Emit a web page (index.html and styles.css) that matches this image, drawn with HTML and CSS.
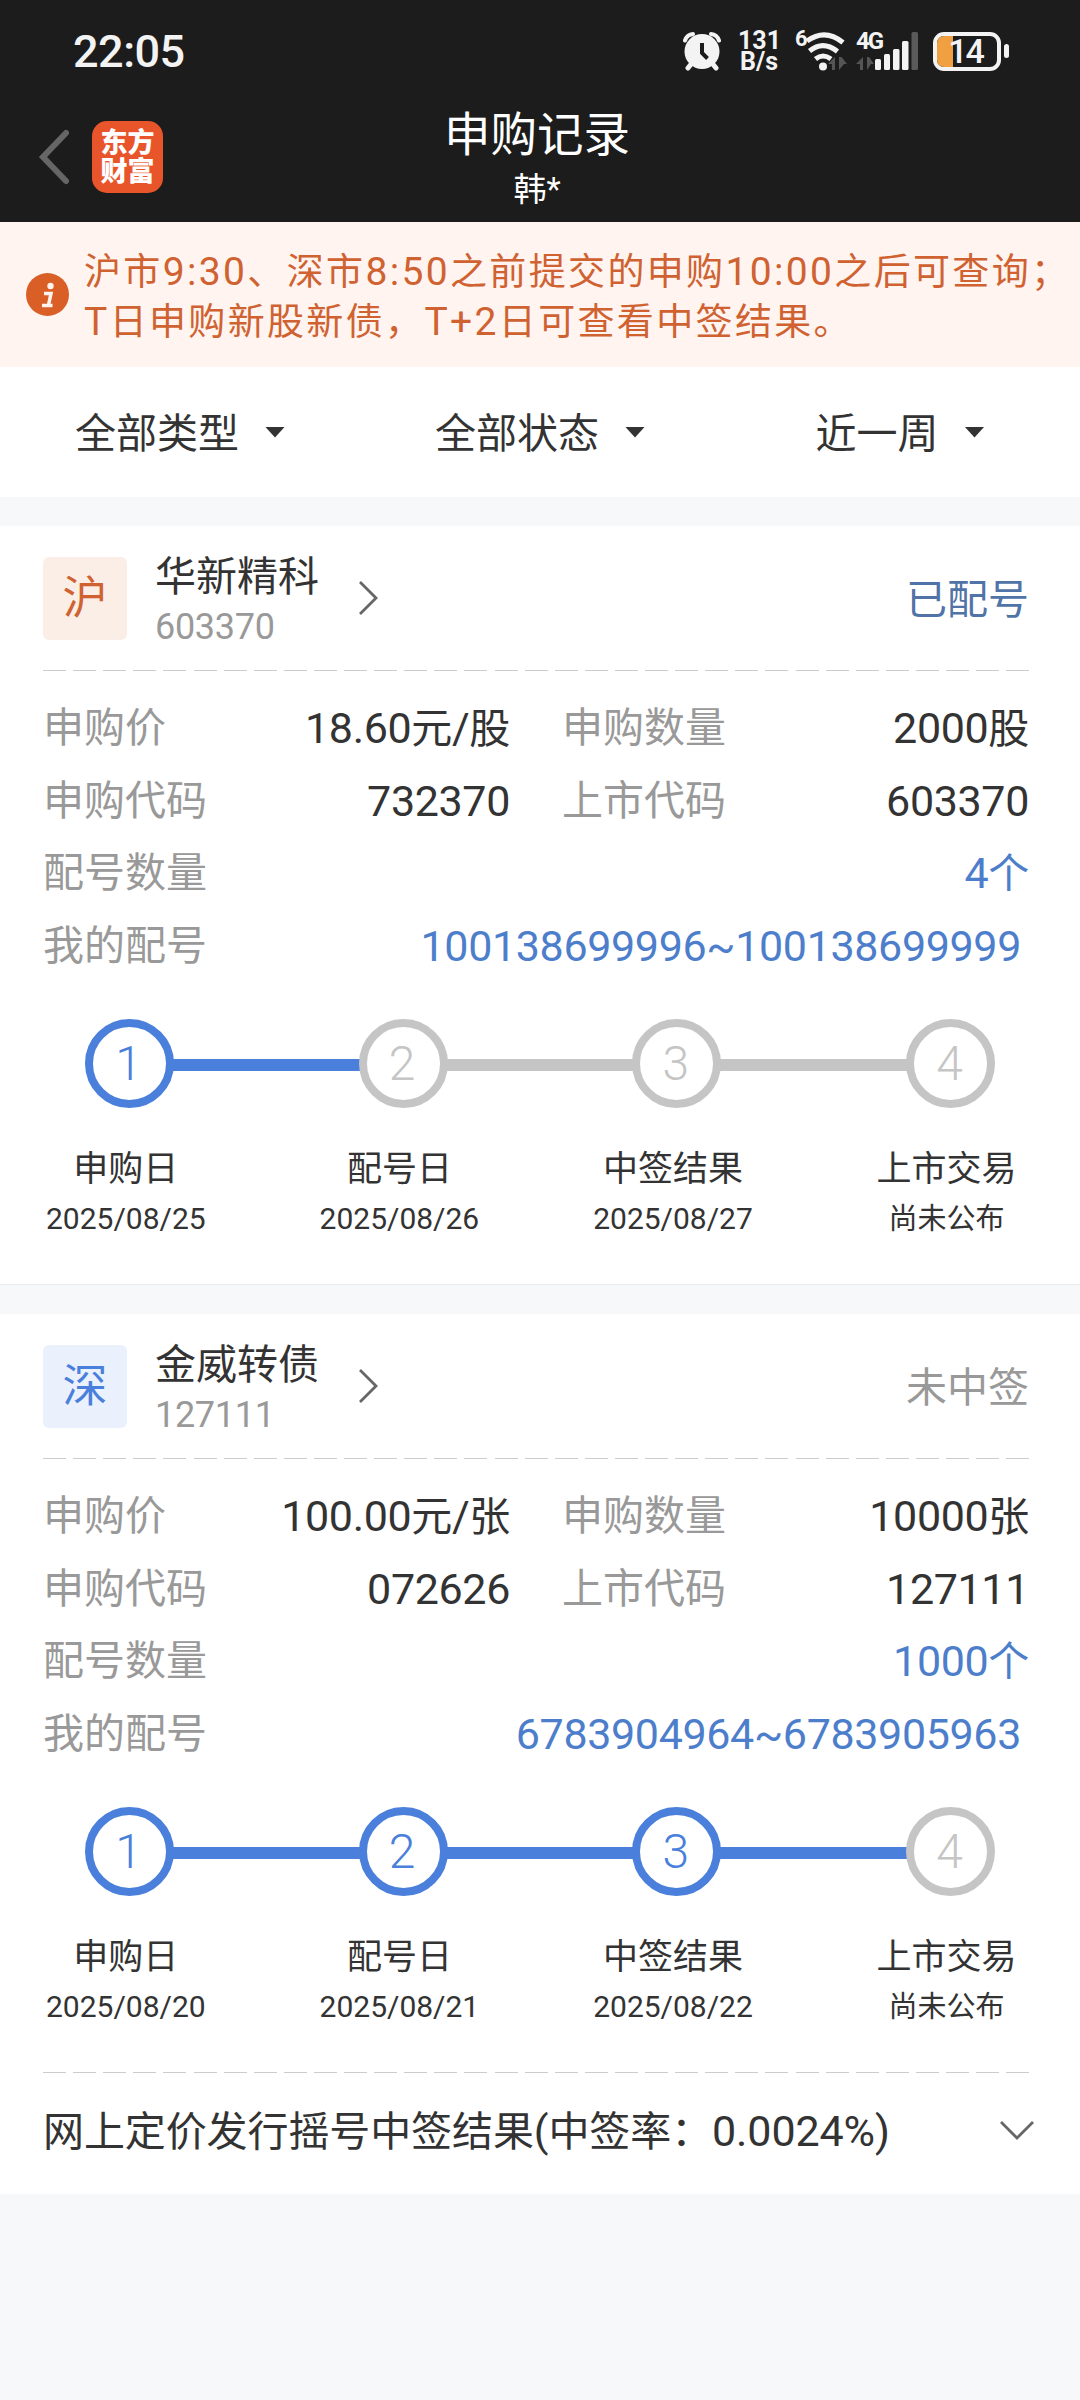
FILE: index.html
```html
<!DOCTYPE html>
<html lang="zh-CN">
<head>
    <meta charset="UTF-8">
    <meta name="viewport" content="width=device-width, initial-scale=1.0">
    <title>申购记录</title>
    <link rel="stylesheet" href="styles.css">
</head>
<body>
    <header class="header">
        <div class="status-bar">
            <span class="time">22:05</span>
            <div class="status-icons">
                <svg class="icon-alarm" width="38" height="40" viewBox="0 0 38 40">
                    <g fill="none" stroke="#f3f3f3" stroke-linecap="round">
                        <path d="M2 9.5Q4 3.500 10 3M36 9.500Q34 3.500 28 3" stroke-width="4"/>
                        <path d="M9 32l-4 5M29 32l4 5" stroke-width="5"/>
                    </g>
                    <circle cx="19" cy="20.500" r="17.500" fill="#f3f3f3"/>
                    <path d="M19 12v10l5.500 5.500" fill="none" stroke="#1c1c1c" stroke-width="4"/>
                </svg>
                <div class="speed">131<br>B/s</div>
                <div class="wifi">
                    <span class="wifi-gen">6</span>
                    <svg width="42" height="40" viewBox="0 0 42 40">
                        <g fill="none" stroke="#f3f3f3" stroke-width="5">
                            <path d="M2 10Q20 -3 38 11.500"/>
                            <path d="M4.500 20Q18 9 32.500 20.500"/>
                            <path d="M10.500 28Q18 22 26 28"/>
                        </g>
                        <circle cx="18" cy="35.500" r="4" fill="#f3f3f3"/>
                        <path d="M23 33l7-7v13h-3v-6zM34 39V26h2.500l5.500 7h-3z" fill="#555"/>
                    </svg>
                </div>
                <div class="signal">
                    <span class="signal-type">4G</span>
                    <svg width="64" height="40" viewBox="0 0 64 40">
                        <path d="M1 33l7-7v13h-3v-6zM12 39V26h2l5 7h-3z" fill="#555"/>
                        <g fill="#f3f3f3">
                            <rect x="20" y="28" width="6" height="11" rx="1.500"/>
                            <rect x="29" y="23" width="6" height="16" rx="1.500"/>
                            <rect x="38" y="18" width="6.500" height="21" rx="1.500"/>
                            <rect x="47" y="10" width="6.500" height="29" rx="1.500"/>
                        </g>
                        <rect x="56.500" y="1" width="6.500" height="38" rx="1.500" fill="#5a5a5a"/>
                    </svg>
                </div>
                <div class="battery">
                    <div class="battery-body"><div class="battery-level"></div><span>14</span></div>
                    <div class="battery-cap"></div>
                </div>
            </div>
        </div>
        <div class="nav">
            <div class="nav-left">
                <svg width="32" height="56" viewBox="0 0 32 56">
                    <path d="M28 4L5 28l23 24" fill="none" stroke="#666" stroke-width="6" stroke-linecap="round"/>
                </svg>
                <div class="logo"><span>东方</span><span>财富</span></div>
            </div>
            <div class="nav-title">
                <h1>申购记录</h1>
                <p>韩*</p>
            </div>
        </div>
    </header>

    <div class="notice">
        <svg width="43" height="43" viewBox="0 0 43 43">
            <circle cx="21.500" cy="21.500" r="21.500" fill="#d95f27"/>
            <circle cx="24.500" cy="13" r="3.200" fill="#fff4f0"/>
            <path d="M18 20.500h7l-2.500 11.500M16 32.500h10.500" fill="none" stroke="#fff4f0" stroke-width="3.500"/>
        </svg>
        <p>沪市<b>9:30</b>、深市<b>8:50</b>之前提交的申购<b>10:00</b>之后可查询；<br><b>T</b>日申购新股新债，<b>T+2</b>日可查看中签结果。</p>
    </div>

    <div class="filters">
        <div class="filter"><span>全部类型</span><i class="arrow"></i></div>
        <div class="filter"><span>全部状态</span><i class="arrow"></i></div>
        <div class="filter"><span>近一周</span><i class="arrow"></i></div>
    </div>

    <!-- 华新精科 -->
    <section class="card">
        <div class="card-head">
            <div class="market sh">沪</div>
            <div class="stock">
                <h2>华新精科</h2>
                <p>603370</p>
            </div>
            <svg class="chevron" width="22" height="36" viewBox="0 0 22 36">
                <path d="M2 2l16 16L2 34" fill="none" stroke="#666" stroke-width="2.800"/>
            </svg>
            <span class="state done">已配号</span>
        </div>
        <div class="dash"></div>
        <div class="info">
            <div class="cell"><span class="label">申购价</span><span class="value">18.60<em>元</em>/<em>股</em></span></div>
            <div class="cell"><span class="label">申购数量</span><span class="value">2000<em>股</em></span></div>
            <div class="cell"><span class="label">申购代码</span><span class="value">732370</span></div>
            <div class="cell"><span class="label">上市代码</span><span class="value">603370</span></div>
            <div class="cell wide"><span class="label">配号数量</span><span class="value link">4<em>个</em></span></div>
            <div class="cell wide"><span class="label">我的配号</span><span class="value link numbers">100138699996~100138699999</span></div>
        </div>
        <div class="track">
            <div class="dot on">1</div>
            <div class="line on"></div>
            <div class="dot">2</div>
            <div class="line"></div>
            <div class="dot">3</div>
            <div class="line"></div>
            <div class="dot">4</div>
        </div>
        <div class="steps">
            <div class="step"><h3>申购日</h3><p>2025/08/25</p></div>
            <div class="step"><h3>配号日</h3><p>2025/08/26</p></div>
            <div class="step"><h3>中签结果</h3><p>2025/08/27</p></div>
            <div class="step"><h3>上市交易</h3><p class="none">尚未公布</p></div>
        </div>
    </section>

    <!-- 金威转债 -->
    <section class="card">
        <div class="card-head">
            <div class="market sz">深</div>
            <div class="stock">
                <h2>金威转债</h2>
                <p>127111</p>
            </div>
            <svg class="chevron" width="22" height="36" viewBox="0 0 22 36">
                <path d="M2 2l16 16L2 34" fill="none" stroke="#666" stroke-width="2.800"/>
            </svg>
            <span class="state">未中签</span>
        </div>
        <div class="dash"></div>
        <div class="info">
            <div class="cell"><span class="label">申购价</span><span class="value">100.00<em>元</em>/<em>张</em></span></div>
            <div class="cell"><span class="label">申购数量</span><span class="value">10000<em>张</em></span></div>
            <div class="cell"><span class="label">申购代码</span><span class="value">072626</span></div>
            <div class="cell"><span class="label">上市代码</span><span class="value">127111</span></div>
            <div class="cell wide"><span class="label">配号数量</span><span class="value link">1000<em>个</em></span></div>
            <div class="cell wide"><span class="label">我的配号</span><span class="value link numbers">6783904964~6783905963</span></div>
        </div>
        <div class="track">
            <div class="dot on">1</div>
            <div class="line on"></div>
            <div class="dot on">2</div>
            <div class="line on"></div>
            <div class="dot on">3</div>
            <div class="line on"></div>
            <div class="dot">4</div>
        </div>
        <div class="steps">
            <div class="step"><h3>申购日</h3><p>2025/08/20</p></div>
            <div class="step"><h3>配号日</h3><p>2025/08/21</p></div>
            <div class="step"><h3>中签结果</h3><p>2025/08/22</p></div>
            <div class="step"><h3>上市交易</h3><p class="none">尚未公布</p></div>
        </div>
        <div class="dash"></div>
        <div class="result">
            <span>网上定价发行摇号中签结果<b>(</b>中签率：<b>0.0024%)</b></span>
            <svg width="36" height="22" viewBox="0 0 36 22">
                <path d="M2 2l16 16L34 2" fill="none" stroke="#666" stroke-width="2.800"/>
            </svg>
        </div>
    </section>
</body>
</html>
```

FILE: styles.css
```css
* {
    box-sizing: border-box;
    margin: 0;
    padding: 0;
}

body {
    width: 1080px;
    min-height: 2400px;
    background-color: #f7f8fa;
    color: #333;
    font-family: Roboto, "Noto Sans CJK SC", sans-serif;
    font-size: 41px;
}

h1, h2, h3, b {
    font-weight: normal;
}

em, i {
    font-style: normal;
}

svg {
    display: block;
    flex: none;
}

/* header */
.header {
    height: 222px;
    background-color: #1c1c1c;
    color: #fff;
}

.status-bar {
    display: flex;
    justify-content: space-between;
    height: 102px;
    padding: 31px 71px 0 73px;
    color: #f3f3f3;
    font-weight: 500;
}

.time {
    font-size: 45px;
    line-height: 41px;
    letter-spacing: -0.5px;
}

.status-icons {
    display: flex;
    height: 40px;
}

.speed {
    width: 42px;
    margin-top: -1px;
    margin-left: 17px;
    font-size: 25px;
    line-height: 21px;
    font-weight: 700;
    text-align: center;
}

.wifi {
    display: flex;
    margin-left: 15px;
}

.wifi-gen {
    width: 10px;
    font-size: 22px;
    line-height: 16px;
    font-weight: 700;
    letter-spacing: -1px;
}

.signal {
    position: relative;
    margin-left: 8px;
}

.signal-type {
    position: absolute;
    top: 0;
    left: 1px;
    font-size: 24px;
    line-height: 21px;
    font-weight: 700;
    letter-spacing: -2px;
}

.battery {
    display: flex;
    align-items: center;
    margin-left: 14px;
}

.battery-body {
    position: relative;
    display: flex;
    align-items: center;
    justify-content: center;
    width: 68px;
    height: 39px;
    border: 4px solid #f3f3f3;
    border-radius: 11px;
    overflow: hidden;
    font-size: 34px;
    line-height: 31px;
}

.battery-level {
    position: absolute;
    left: 0;
    top: 0;
    width: 16px;
    height: 31px;
    background-color: #f0a040;
}

.battery-body span {
    position: relative;
    margin-right: 3px;
    letter-spacing: -2px;
}

.battery-cap {
    width: 5px;
    height: 14px;
    margin-left: 3px;
    border-radius: 3px;
    background-color: #f3f3f3;
}

.nav {
    display: grid;
    grid-template-columns: 300px 1fr 306px;
    height: 120px;
}

.nav-left {
    display: flex;
    align-items: center;
    height: 109px;
    padding-left: 38px;
}

.logo {
    display: flex;
    flex-direction: column;
    justify-content: center;
    width: 71px;
    height: 72px;
    margin-left: 22px;
    padding-top: 2px;
    border-radius: 15px;
    background-color: #e9552b;
    font-size: 27px;
    line-height: 29px;
    font-weight: 900;
    text-align: center;
}

.nav-title {
    padding-top: 1px;
    text-align: center;
}

.nav-title h1 {
    font-size: 46.5px;
    line-height: 64px;
}

.nav-title p {
    font-size: 33px;
    line-height: 46px;
}

/* notice */
.notice {
    display: flex;
    align-items: center;
    height: 145px;
    padding-left: 26px;
    background-color: #fff4f0;
    color: #cf6230;
}

.notice p {
    margin-left: 15px;
    padding-top: 6px;
    font-size: 37px;
    line-height: 50px;
    letter-spacing: 2.35px;
    white-space: nowrap;
}

.notice b {
    font-size: 39px;
    line-height: 1;
}

/* filters */
.filters {
    display: grid;
    grid-template-columns: repeat(3, 1fr);
    height: 130px;
    margin-bottom: 29px;
    background-color: #fff;
}

.filter {
    display: flex;
    align-items: center;
    justify-content: center;
}

.filter span {
    padding-bottom: 4px;
}

.arrow {
    width: 20px;
    height: 11px;
    margin-left: 26px;
    background-color: #333;
    clip-path: polygon(0 0, 100% 0, 50% 100%);
}

/* card */
.card {
    margin-bottom: 29px;
    padding: 0 51px 0 43px;
    border-bottom: 1px solid #e9eaec;
    background-color: #fff;
    overflow: hidden;
}

.card:last-child {
    border-bottom: none;
}

.card-head {
    display: flex;
    align-items: center;
    height: 144px;
}

.market {
    width: 84px;
    height: 83px;
    border-radius: 6px;
    font-size: 45px;
    line-height: 83px;
    text-align: center;
}

.sh {
    background-color: #fbeee6;
    color: #cf6230;
}

.sz {
    background-color: #ebf1fc;
    color: #4a7fdb;
}

.stock {
    margin-left: 28px;
    padding-top: 4px;
}

.stock h2 {
    font-size: 41px;
    line-height: 54px;
}

.stock p {
    color: #999;
    font-size: 36px;
    line-height: 46px;
    letter-spacing: -0.3px;
}

.chevron {
    margin-left: 39px;
}

.state {
    margin-left: auto;
    padding-bottom: 4px;
    color: #999;
}

.done {
    color: #5073a8;
}

.dash {
    height: 1px;
    background: repeating-linear-gradient(to right, #ccc 0, #ccc 23px, transparent 23px, transparent 30.1px);
}

.info {
    display: grid;
    grid-template-columns: 1fr 1fr;
    column-gap: 52px;
    padding: 21px 0 37px;
    line-height: 72.5px;
}

.cell {
    display: flex;
    justify-content: space-between;
}

.wide {
    grid-column: 1 / 3;
}

.label {
    color: #999;
}

.value {
    font-size: 43px;
    letter-spacing: -0.35px;
}

.value em {
    font-size: 41px;
    line-height: 1;
}

.link {
    color: #4d7ecb;
}

.numbers {
    padding-right: 8px;
}

/* progress */
.track {
    display: flex;
    align-items: center;
    padding: 0 34px 0 42px;
}

.dot {
    width: 89px;
    height: 89px;
    padding-right: 2px;
    border: 8.5px solid #c5c5c5;
    border-radius: 50%;
    color: #c5c5c5;
    font-size: 48px;
    line-height: 74px;
    font-weight: 300;
    text-align: center;
}

.line {
    flex: 1;
    height: 12px;
    margin: 3px -2px 0;
    background-color: #c5c5c5;
}

.dot.on {
    border-color: #4a7fdb;
    color: #4a7fdb;
}

.line.on {
    background-color: #4a7fdb;
}

.steps {
    display: grid;
    grid-template-columns: repeat(4, 273.6px);
    margin-left: -54px;
    padding: 37px 0 41px;
    text-align: center;
}

.step h3 {
    font-size: 35px;
    line-height: 50px;
}

.step p {
    font-size: 30px;
    line-height: 48px;
}

.step .none {
    font-size: 29px;
}

.result {
    display: flex;
    align-items: center;
    justify-content: space-between;
    height: 121px;
    margin-right: -6px;
    padding-bottom: 5px;
}

.result span {
    padding-bottom: 7px;
    letter-spacing: -0.1px;
}

.result b {
    font-size: 43px;
    line-height: 1;
}
```
